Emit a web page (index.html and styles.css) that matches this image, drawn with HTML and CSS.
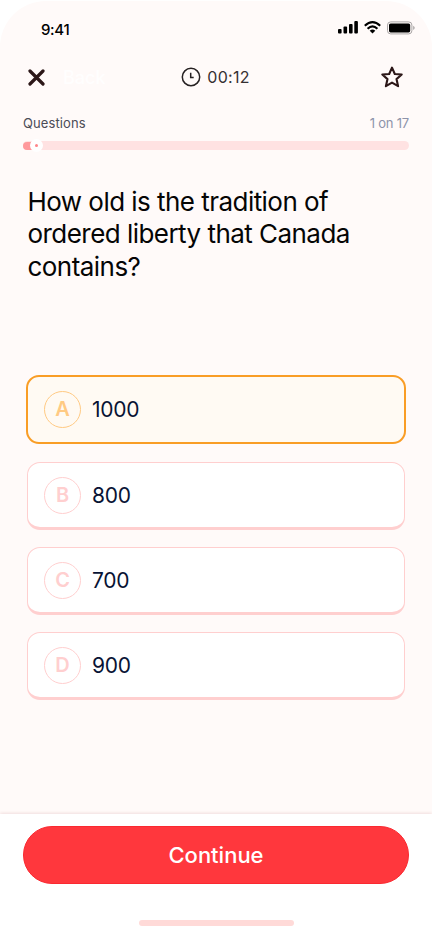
FILE: index.html
```html
<!DOCTYPE html>
<html lang="en">
<head>
<meta charset="utf-8">
<meta name="viewport" content="width=device-width, initial-scale=1">
<title>Quiz</title>
<link rel="stylesheet" href="styles.css">
</head>
<body>
<div class="screen">
  <div class="status">
    <span class="clock">9:41</span>
    <div class="indicators">
      <svg width="20" height="12" viewBox="0 0 20 12"><rect y="8" width="3.6" height="4.4" rx="1"/><rect x="5.5" y="5.6" width="3.6" height="6.8" rx="1"/><rect x="11" y="3" width="3.6" height="9.4" rx="1"/><rect x="16.3" y="0" width="3.6" height="12.4" rx="1"/></svg>
      <svg width="17" height="13" viewBox="0 0 17 13"><g fill="none" stroke="#000" stroke-width="2.2"><path d="M.8 4.8Q8.5-2.5 16.2 4.8"/><path d="M3.6 7.7Q8.5 3.1 13.4 7.7"/></g><path d="M5.7 9.8Q8.5 7.4 11.3 9.8L8.5 12.6Z"/></svg>
      <svg width="28" height="14" viewBox="0 0 28 14"><rect x=".5" y=".9" width="24.4" height="12" rx="3.2" fill="none" stroke="#a9a5a5"/><rect x="2" y="2.4" width="21.2" height="9" rx="1.6"/><path d="M26.2 4.8c2 .8 2 3.4 0 4.2z" fill="#a9a5a5"/></svg>
    </div>
  </div>
  <header class="topbar">
    <div class="back">
      <svg width="17" height="17" viewBox="0 0 17 17"><path d="M2 2L15 15M15 2L2 15" stroke="#2c1718" stroke-width="3.2" stroke-linecap="round"/></svg>
      <span>Back</span>
    </div>
    <div class="timer">
      <svg width="20" height="20" viewBox="0 0 20 20" fill="none" stroke="#262122" stroke-width="1.5"><circle cx="10" cy="10" r="8.7"/><path d="M9.7 5.8V10.4H12.7"/></svg>
      <span>00:12</span>
    </div>
    <svg class="star" width="24" height="24" viewBox="0 0 24 24"><path d="M12 2.6L14.8 9 21.7 9.5 16.5 14.1 18.1 21.2 12 17.6 5.9 21.2 7.5 14.1 2.3 9.5 9.2 9Z" fill="none" stroke="#2c1718" stroke-width="2.1" stroke-linejoin="round"/></svg>
  </header>
  <section class="progress">
    <div class="labels"><span>Questions</span><span class="count">1 on 17</span></div>
    <div class="track"><div class="fill"></div><div class="knob"></div></div>
  </section>
  <h1>How old is the tradition of<br>ordered liberty that Canada<br>contains?</h1>
  <main class="answers">
    <div class="answer selected"><span class="letter">A</span><span class="value">1000</span></div>
    <div class="answer"><span class="letter">B</span><span class="value">800</span></div>
    <div class="answer"><span class="letter">C</span><span class="value">700</span></div>
    <div class="answer"><span class="letter">D</span><span class="value">900</span></div>
  </main>
  <footer>
    <button>Continue</button>
    <div class="home"></div>
  </footer>
</div>
</body>
</html>
```
FILE: styles.css
```css
* { box-sizing: border-box; }
body { margin: 0; background: #fff; font-family: Inter, sans-serif; }
svg { display: block; }
.screen { width: 432px; height: 937px; margin-top: 1px; display: flex; flex-direction: column; background: #fffaf9; border-radius: 46px 46px 0 0; overflow: hidden; }
.status { height: 58px; padding: 0 17.5px 0 41px; display: flex; justify-content: space-between; }
.clock { margin-top: 20px; font-size: 15px; line-height: 18px; font-weight: 500; letter-spacing: -.35px; }
.indicators { display: flex; gap: 5.7px; padding-top: 20px; }
.indicators svg { overflow: visible; }
.topbar { height: 36px; padding: 0 28px 0 28px; display: grid; grid-template-columns: 1fr auto 1fr; align-items: center; }
.back { display: flex; align-items: center; gap: 18px; color: #fffefe; font-size: 18px; font-weight: 500; }
.timer { display: flex; align-items: center; gap: 6px; margin-right: 1px; font-size: 16px; color: #353032; letter-spacing: .25px; }
.star { justify-self: end; }
.progress { padding: 20px 23px 0; }
.labels { display: flex; justify-content: space-between; font-size: 13px; line-height: 16px; color: #4b4c57; letter-spacing: .1px; }
.count { color: #8d93aa; letter-spacing: -.2px; }
.track { margin-top: 10px; height: 9px; border-radius: 5px; background: #ffe2e2; display: flex; align-items: center; }
.fill { width: 10px; height: 8px; border-radius: 5px 0 0 5px; background: #ff999c; }
.knob { width: 13px; height: 13px; margin-left: -3px; border: 5px solid #fff; border-radius: 50%; background: #ff8589; flex: none; }
h1 { margin: 36px 0 0 27.5px; font-size: 26px; line-height: 32.3px; font-weight: 400; letter-spacing: -.54px; color: #050505; white-space: nowrap; }
.answers { margin: 92px 27px 0; display: flex; flex-direction: column; gap: 17px; }
.answer { height: 68px; padding: 1px 16px 0; display: flex; align-items: center; gap: 12px; background: #fff; border: 1px solid #ffcfcf; border-bottom-width: 3px; border-radius: 13px; }
.letter { width: 37px; height: 37px; border: 1px solid #ffcfcf; border-radius: 50%; display: grid; place-items: center; color: #ffcfcf; font-size: 20px; line-height: 24px; font-weight: 600; }
.value { margin-left: -1px; padding-top: 1px; color: #081334; font-size: 21px; line-height: 26px; letter-spacing: -.25px; }
.answer.selected { height: 69px; margin: 0 -1px 1px; padding: 0 16px; border: 2px solid #f99d26; background: #fffaf3; }
.selected .letter { border-color: #ffca83; color: #ffca83; }
footer { margin-top: auto; height: 124px; padding-top: 12px; background: #fff; display: flex; flex-direction: column; align-items: center; box-shadow: 0 -1px 3px #f1dedd; }
button { width: 386px; height: 58px; border: 1px solid #fa2930; border-radius: 29px; padding: 0; background: #ff373d; color: #fff; font: 500 22px/28px Inter, sans-serif; letter-spacing: 0; }
.home { width: 155px; height: 6px; margin-top: 36px; border-radius: 3px; background: #ffdad8; }
```
